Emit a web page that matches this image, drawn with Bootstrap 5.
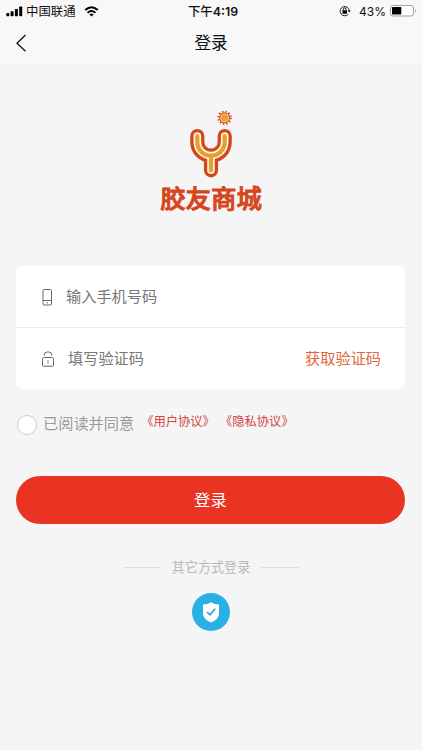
<!DOCTYPE html>
<html lang="zh-CN">
<head>
<meta charset="utf-8">
<meta name="viewport" content="width=device-width, initial-scale=1">
<title>登录</title>
<link href="https://cdn.jsdelivr.net/npm/bootstrap@5.3.0/dist/css/bootstrap.min.css" rel="stylesheet">
<style>
body{background:#f5f5f5;font-family:"Liberation Sans","Noto Sans CJK SC",sans-serif;color:#111;height:750px;overflow:hidden}
svg{display:block;flex:none}
.top-area{background:#f8f8f8;height:64px}
.status-bar{height:22px;font-size:12.4px;line-height:22px;padding:0 5px 0 6px}
.status-bar .side{flex:1 1 0}
.carrier{margin-left:3px;padding-top:1px}
.clock{font-family:Inter,"Noto Sans CJK SC",sans-serif;font-weight:600;font-size:12.4px;padding:1px 0 0 3px}
.clock .cjk{font-weight:500}
.pct{font-family:Inter,sans-serif;font-size:12px;padding-top:1px}
.title-bar{height:42px;padding:0 15px}
.title-bar h1{font-size:16.6px;line-height:42px;font-weight:400;padding-top:2px}
.brand{height:202px;padding-top:45px}
.brand-name{color:#d6461c;font-size:25.4px;font-weight:500;-webkit-text-stroke:.9px #d6461c;stroke-linejoin:round;line-height:32px;margin-top:4px}
.panel{margin:0 17px 0 16px;border-radius:7px;background:#fff}
.field{height:61px;padding:0 24px 0 25px;font-size:15.2px;color:#777}
.field span{padding-top:2px}
.field .label{margin-left:13px}
.field+.field{border-top:1px solid #ececec;height:62px}
.get-code{color:#e0683f}
.agree{height:51px;margin-top:10px;padding-left:17px;font-size:15.2px;color:#999}
.tick{width:20px;height:20px;border:1px solid #ccc;border-radius:50%;background:#fff;margin-right:6px}
.agree a{color:#d4453f;font-size:12.3px;line-height:20px}
.agree .links{margin-left:7px;margin-top:-5px;gap:5px}
.submit{margin:26px 17px 0 16px;height:48px;background:#e93323;border:0;border-radius:24px;color:#fff;font-size:16.4px;line-height:48px}
.other{margin-top:33px;font-size:13.1px;line-height:20px;color:#b9b9b9;gap:11px}
.other .caption{padding-top:1px;margin-bottom:-1px}
.rule{width:38px;height:1px;background:#e0e0e0}
.alt{margin-top:16px}
</style>
<script src="https://cdn.jsdelivr.net/npm/bootstrap@5.3.0/dist/js/bootstrap.bundle.min.js"></script>
</head>
<body>
<header class="top-area">
  <div class="status-bar d-flex align-items-center">
    <div class="side d-flex align-items-center">
      <svg width="17" height="11" viewBox="0 0 17 11"><g fill="#000"><rect x=".3" y="7" width="3" height="3.200" rx=".7"/><rect x="4.6" y="5.2" width="3" height="5" rx=".7"/><rect x="8.9" y="3" width="3" height="7.200" rx=".7"/><rect x="13.2" y=".5" width="3" height="9.700" rx=".7"/></g></svg>
      <span class="carrier">中国联通</span>
      <svg class="ms-1 ps-1" width="19" height="11" viewBox="0 0 14 11"><g fill="none" stroke="#000" stroke-width="2"><path d="M.7 4Q7-1.6 13.3 4"/><path d="M3.1 6.7Q7 3.2 10.9 6.7"/></g><path d="M4.9 8.4Q7 6.7 9.1 8.4L7 10.6Z"/></svg>
    </div>
    <div class="clock"><span class="cjk">下午</span>4:19</div>
    <div class="side d-flex align-items-center justify-content-end">
      <svg width="12" height="12" viewBox="0 0 12 12"><path d="M9.1 9.3A4.6 4.6 0 1 1 10.3 5.6" fill="none" stroke="#222" stroke-width="1"/><path d="M8.6 5.4h3.2L10.2 7.6Z"/><rect x="3.4" y="5.3" width="4.6" height="3.4" rx=".4"/><path d="M4.3 5.5V4.3a1.4 1.4 0 0 1 2.8 0v1.2" fill="none" stroke="#000" stroke-width=".9"/></svg>
      <span class="pct ms-2">43%</span>
      <svg class="ms-1" width="27" height="12" viewBox="0 0 27 12"><rect x=".5" y=".5" width="23" height="10.5" rx="2.5" fill="#fff" stroke="#a0a0a0"/><rect x="2" y="2" width="9.3" height="7.5" rx=".8"/><path d="M25 4q1.7 1.7 0 3.5z" fill="#888"/></svg>
    </div>
  </div>
  <nav class="title-bar d-flex align-items-center">
    <svg width="12" height="18" viewBox="0 0 12 18"><path d="M10.5 1 2 9.200l8.500 8" fill="none" stroke="#111" stroke-width="1.300"/></svg>
    <h1 class="flex-fill text-center mb-0">登录</h1>
    <span class="pe-2 me-1"></span>
  </nav>
</header>
<main>
  <section class="brand d-flex flex-column align-items-center">
    <svg width="44" height="70" viewBox="189 109 44 70">
      <g fill="none" stroke-linecap="round" stroke-linejoin="round">
        <path d="M197.300 136v6a13.700 13.700 0 0 0 27.400 0v-6M211 155.500v14.800" stroke="#d6461c" stroke-width="14.200"/>
        <path d="M197.300 136v6a13.700 13.700 0 0 0 27.400 0v-6M211 155.500v14.800" stroke="#fff5e5" stroke-width="7.600"/>
        <path d="M197.300 136v6a13.700 13.700 0 0 0 27.400 0v-6M211 155.500v14.800" stroke="#e3a22e" stroke-width="4.200"/>
      </g>
      <circle cx="224.600" cy="117.800" r="6.300" fill="none" stroke="#d6461c" stroke-width="1.900" stroke-dasharray="1.400 1.900"/>
      <circle cx="224.600" cy="117.800" r="4.900" fill="#ffe7c5" stroke="#d6461c" stroke-width="1.100"/>
      <circle cx="224.600" cy="117.800" r="3.600" fill="#e3a22e"/>
    </svg>
    <div class="brand-name">胶友商城</div>
  </section>
  <form>
    <div class="panel">
      <div class="field d-flex align-items-center">
        <svg width="12" height="18" viewBox="0 0 12 18"><g fill="none" stroke="#626975" stroke-width="1"><rect x="2" y="1.5" width="8.5" height="15.5" rx="1"/><path d="M2 12.5h8.500"/></g><path d="M6.200 14v1.500" stroke="#626975"/></svg>
        <span class="label">输入手机号码</span>
      </div>
      <div class="field d-flex align-items-center">
        <svg width="14" height="18" viewBox="0 0 14 18"><g fill="none" stroke="#626975"><rect x="1.500" y="7.500" width="11" height="8.700" rx="1"/><path d="M3 5.600a4 3.800 0 0 1 8 0"/></g><path d="M7 10v3.600" stroke="#d46c70"/></svg>
        <span class="label">填写验证码</span>
        <span class="get-code ms-auto">获取验证码</span>
      </div>
    </div>
    <div class="agree d-flex align-items-center">
      <span class="tick"></span><span>已阅读并同意</span>
      <span class="links d-flex"><a class="text-decoration-none" href="#">《用户协议》</a><a class="text-decoration-none" href="#">《隐私协议》</a></span>
    </div>
    <div class="d-grid"><button type="button" class="submit p-0">登录</button></div>
  </form>
  <div class="other d-flex align-items-center justify-content-center"><span class="rule"></span><span class="caption">其它方式登录</span><span class="rule"></span></div>
  <div class="alt d-flex justify-content-center">
    <svg width="38" height="38" viewBox="0 0 38 38"><circle cx="19" cy="19" r="19" fill="#29b1e6"/><path d="M19 9.200q3.400 2.300 8 2.300v9.200q0 5.200-8 8.800-8-3.600-8-8.800v-9.200q4.600 0 8-2.300z" fill="#fff"/><path d="m15 19 3 2.800 5.200-6" fill="none" stroke="#29a1d4" stroke-width="1.700"/></svg>
  </div>
</main>
</body>
</html>
